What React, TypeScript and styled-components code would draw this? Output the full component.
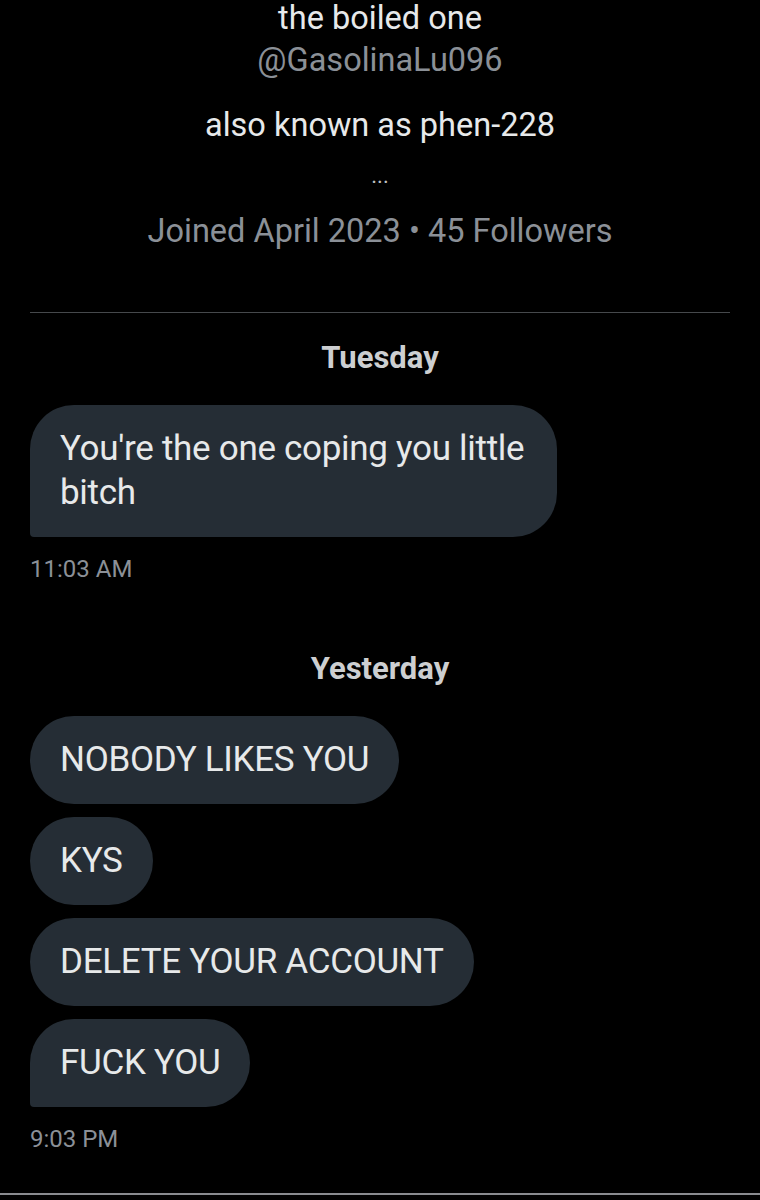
import React from 'react';
import styled, { createGlobalStyle } from 'styled-components';

const GlobalStyle = createGlobalStyle`
  html, body {
    margin: 0;
    padding: 0;
    background: #000;
  }
  body {
    font-family: Roboto, 'Liberation Sans', sans-serif;
    color: #e7e9ea;
  }
`;

const Page = styled.div`
  width: 760px;
  height: 1200px;
  background: #000;
  overflow: hidden;
  display: flex;
  flex-direction: column;
`;

const Profile = styled.header`
  display: flex;
  flex-direction: column;
  align-items: center;
  margin: 0 30px;
  height: 313px;
  border-bottom: 1.5px solid #46494c;
  box-sizing: border-box;
`;

const Name = styled.div`
  font-size: 32.5px;
  line-height: 36px;
  color: #e7e9ea;
`;

const Handle = styled.div`
  font-size: 32.5px;
  line-height: 42px;
  color: #8b9097;
  margin-top: 3px;
`;

const Bio = styled.div`
  font-size: 32.5px;
  line-height: 42px;
  color: #e7e9ea;
  margin-top: 23px;
`;

const More = styled.div`
  font-size: 22px;
  line-height: 20px;
  color: #c0c2c4;
  margin-top: 20px;
`;

const Meta = styled.div`
  font-size: 32.5px;
  line-height: 42px;
  color: #8b9097;
  margin-top: 24px;
`;

const Thread = styled.main`
  display: flex;
  flex-direction: column;
  padding: 0 30px;
  flex: 1;
`;

const DayLabel = styled.div<{ $top: number }>`
  align-self: center;
  font-size: 31px;
  font-weight: 700;
  color: #cdcfd1;
  line-height: 36px;
  margin-top: ${({ $top }) => $top}px;
  margin-bottom: 29px;
`;

const Group = styled.div`
  display: flex;
  flex-direction: column;
  align-items: flex-start;
  gap: 13px;
`;

const Bubble = styled.div<{ $last?: boolean }>`
  background: #252d35;
  color: #e7e9ea;
  font-size: 35px;
  letter-spacing: -0.3px;
  line-height: 44px;
  padding: 22px 30px;
  border-radius: 44px;
  border-bottom-left-radius: ${({ $last }) => ($last ? '4px' : '44px')};
  max-width: 467px;
`;

const Time = styled.div`
  font-size: 24px;
  color: #8b9097;
  line-height: 30px;
  margin-top: 17px;
`;

const BottomRule = styled.div`
  height: 2px;
  background: #8a8b8f;
  margin-top: auto;
  margin-bottom: 5px;
`;

interface Day {
  label: string;
  top: number;
  messages: string[];
  time: string;
}

const days: Day[] = [
  {
    label: 'Tuesday',
    top: 27,
    messages: ["You're the one coping you little bitch"],
    time: '11:03 AM',
  },
  {
    label: 'Yesterday',
    top: 67,
    messages: ['NOBODY LIKES YOU', 'KYS', 'DELETE YOUR ACCOUNT', 'FUCK YOU'],
    time: '9:03 PM',
  },
];

export default function App() {
  return (
    <>
      <GlobalStyle />
      <Page>
        <Profile>
          <Name>the boiled one</Name>
          <Handle>@GasolinaLu096</Handle>
          <Bio>also known as phen-228</Bio>
          <More>...</More>
          <Meta>Joined April 2023 • 45 Followers</Meta>
        </Profile>
        <Thread>
          {days.map((day) => (
            <React.Fragment key={day.label}>
              <DayLabel $top={day.top}>{day.label}</DayLabel>
              <Group>
                {day.messages.map((m, i) => (
                  <Bubble key={i} $last={i === day.messages.length - 1}>
                    {m}
                  </Bubble>
                ))}
              </Group>
              <Time>{day.time}</Time>
            </React.Fragment>
          ))}
        </Thread>
        <BottomRule />
      </Page>
    </>
  );
}
